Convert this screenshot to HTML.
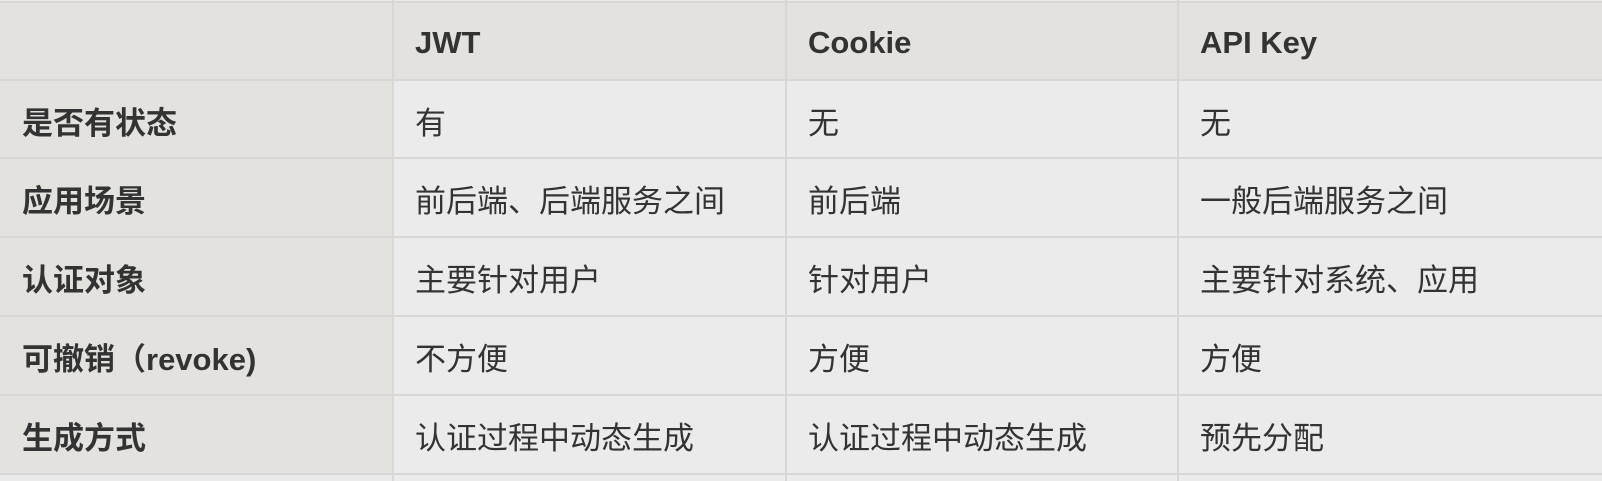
<!DOCTYPE html>
<html><head><meta charset="utf-8"><style>
body{margin:0;width:1602px;height:481px;background:#ebebeb;overflow:hidden;font-family:"Liberation Sans","Noto Sans CJK SC",sans-serif;color:#333;}
.c{position:absolute;box-sizing:border-box;display:flex;align-items:center;padding-left:22px;font-size:31px;background:#ebebeb;}
.h{background:#e3e2df;}
.b{font-weight:bold;}
.l{position:absolute;background:#d8d7d5;}
</style></head><body>
<div id="t"></div>
<script>
var cols=[0,393,786,1178,1602];
var rows=[2,80,158,237,316,395,474];
var data=[["","JWT","Cookie","API Key"],
["是否有状态","有","无","无"],
["应用场景","前后端、后端服务之间","前后端","一般后端服务之间"],
["认证对象","主要针对用户","针对用户","主要针对系统、应用"],
["可撤销（revoke)","不方便","方便","方便"],
["生成方式","认证过程中动态生成","认证过程中动态生成","预先分配"]];
var h="";
for(var r=0;r<6;r++)for(var c=0;c<4;c++){
var cls="c"+((r==0||c==0)?" h":"")+((r==0||c==0)?" b":"");
h+='<div class="'+cls+'" style="left:'+cols[c]+'px;top:'+rows[r]+'px;width:'+(cols[c+1]-cols[c])+'px;height:'+(rows[r+1]-rows[r])+'px;padding-top:'+(r==0?3:2)+'px">'+data[r][c]+'</div>';}
for(var r=0;r<7;r++)h+='<div class="l" style="left:0;top:'+(rows[r]-1)+'px;width:1602px;height:2px"></div>';
for(var c=1;c<4;c++)h+='<div class="l" style="left:'+(cols[c]-1)+'px;top:0;width:2px;height:481px"></div>';
document.getElementById("t").innerHTML=h;
</script>
</body></html>
